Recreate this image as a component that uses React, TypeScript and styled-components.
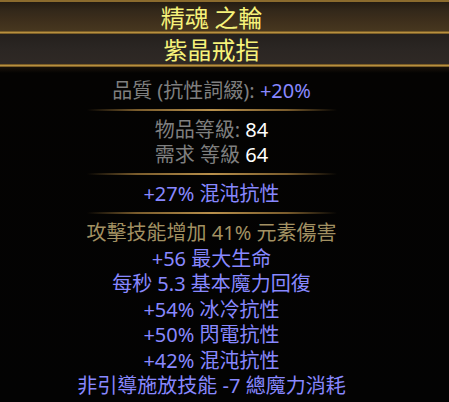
import React from "react";
import styled, { createGlobalStyle } from "styled-components";

const GlobalStyle = createGlobalStyle`
  html, body {
    margin: 0;
    padding: 0;
    background: #000;
  }
  body {
    font-family: "Noto Sans", "Noto Sans CJK TC", sans-serif;
  }
`;

type Tone = "label" | "value" | "magic" | "fractured";

const TONES: Record<Tone, string> = {
  label: "#7f7f7f",
  value: "#ffffff",
  magic: "#8888ff",
  fractured: "#a29162",
};

const MODS: { text: string; tone: Tone }[] = [
  { text: "攻擊技能增加 41% 元素傷害", tone: "fractured" },
  { text: "+56 最大生命", tone: "magic" },
  { text: "每秒 5.3 基本魔力回復", tone: "magic" },
  { text: "+54% 冰冷抗性", tone: "magic" },
  { text: "+50% 閃電抗性", tone: "magic" },
  { text: "+42% 混沌抗性", tone: "magic" },
  { text: "非引導施放技能 -7 總魔力消耗", tone: "magic" },
];

export default function App() {
  return (
    <>
      <GlobalStyle />
      <Tooltip>
        <Header>
          <GoldEdge $h={2} />
          <NameBand>精魂 之輪</NameBand>
          <GoldEdge $h={3} />
          <BaseBand>紫晶戒指</BaseBand>
          <GoldEdge $h={3} />
        </Header>
        <Body>
          <Line>
            <Text $tone="label">品質 (抗性詞綴): </Text>
            <Text $tone="magic">+20%</Text>
          </Line>
          <Separator />
          <Line>
            <Text $tone="label">物品等級: </Text>
            <Text $tone="value">84</Text>
          </Line>
          <Line>
            <Text $tone="label">需求 等級 </Text>
            <Text $tone="value">64</Text>
          </Line>
          <Separator />
          <Line>
            <Text $tone="magic">+27% 混沌抗性</Text>
          </Line>
          <Separator />
          <ModList>
            {MODS.map((m) => (
              <ModLine key={m.text}>
                <Text $tone={m.tone}>{m.text}</Text>
              </ModLine>
            ))}
          </ModList>
        </Body>
      </Tooltip>
    </>
  );
}

const Tooltip = styled.div`
  width: 449px;
  height: 402px;
  overflow: hidden;
  background: #030303;
  display: flex;
  flex-direction: column;
`;

const Header = styled.div`
  display: flex;
  flex-direction: column;
`;

const GoldEdge = styled.div<{ $h: number }>`
  height: ${(p) => p.$h}px;
  background: linear-gradient(180deg, #5e461c 0%, #b8903f 50%, #5e461c 100%);
`;

const Band = styled.div`
  height: 29px;
  line-height: 29px;
  text-align: center;
  padding-right: 26px;
  color: #f6f27a;
  font-family: "Noto Sans CJK TC", sans-serif;
  font-size: 24px;
  white-space: nowrap;
`;

const NameBand = styled(Band)`
  background: linear-gradient(
    180deg,
    #241c12 0%,
    #33281a 30%,
    #3e2f1c 65%,
    #47371f 100%
  );
`;

const BaseBand = styled(Band)`
  height: 30px;
  line-height: 30px;
  background: linear-gradient(180deg, #24201d 0%, #2b2623 50%, #2f2925 100%);
`;

const Body = styled.div`
  flex: 1;
  display: flex;
  flex-direction: column;
  align-items: center;
  padding: 11px 26px 0 0;
  background: linear-gradient(180deg, #1a130a 0px, #040302 6px, #030303 100%);
`;

const Line = styled.div`
  height: 25px;
  line-height: 25px;
  font-size: 20px;
  white-space: nowrap;
`;

const ModList = styled.div`
  display: flex;
  flex-direction: column;
  align-items: center;
`;

const ModLine = styled(Line)`
  height: 25.5px;
  line-height: 25.5px;
`;

const Text = styled.span<{ $tone: Tone }>`
  color: ${(p) => TONES[p.$tone]};
`;

const Separator = styled.div`
  width: 250px;
  height: 2px;
  margin: 6px 0;
  background: linear-gradient(
    90deg,
    rgba(140, 105, 50, 0) 0%,
    #7a5c2c 20%,
    #b8904c 50%,
    #7a5c2c 80%,
    rgba(140, 105, 50, 0) 100%
  );
`;
